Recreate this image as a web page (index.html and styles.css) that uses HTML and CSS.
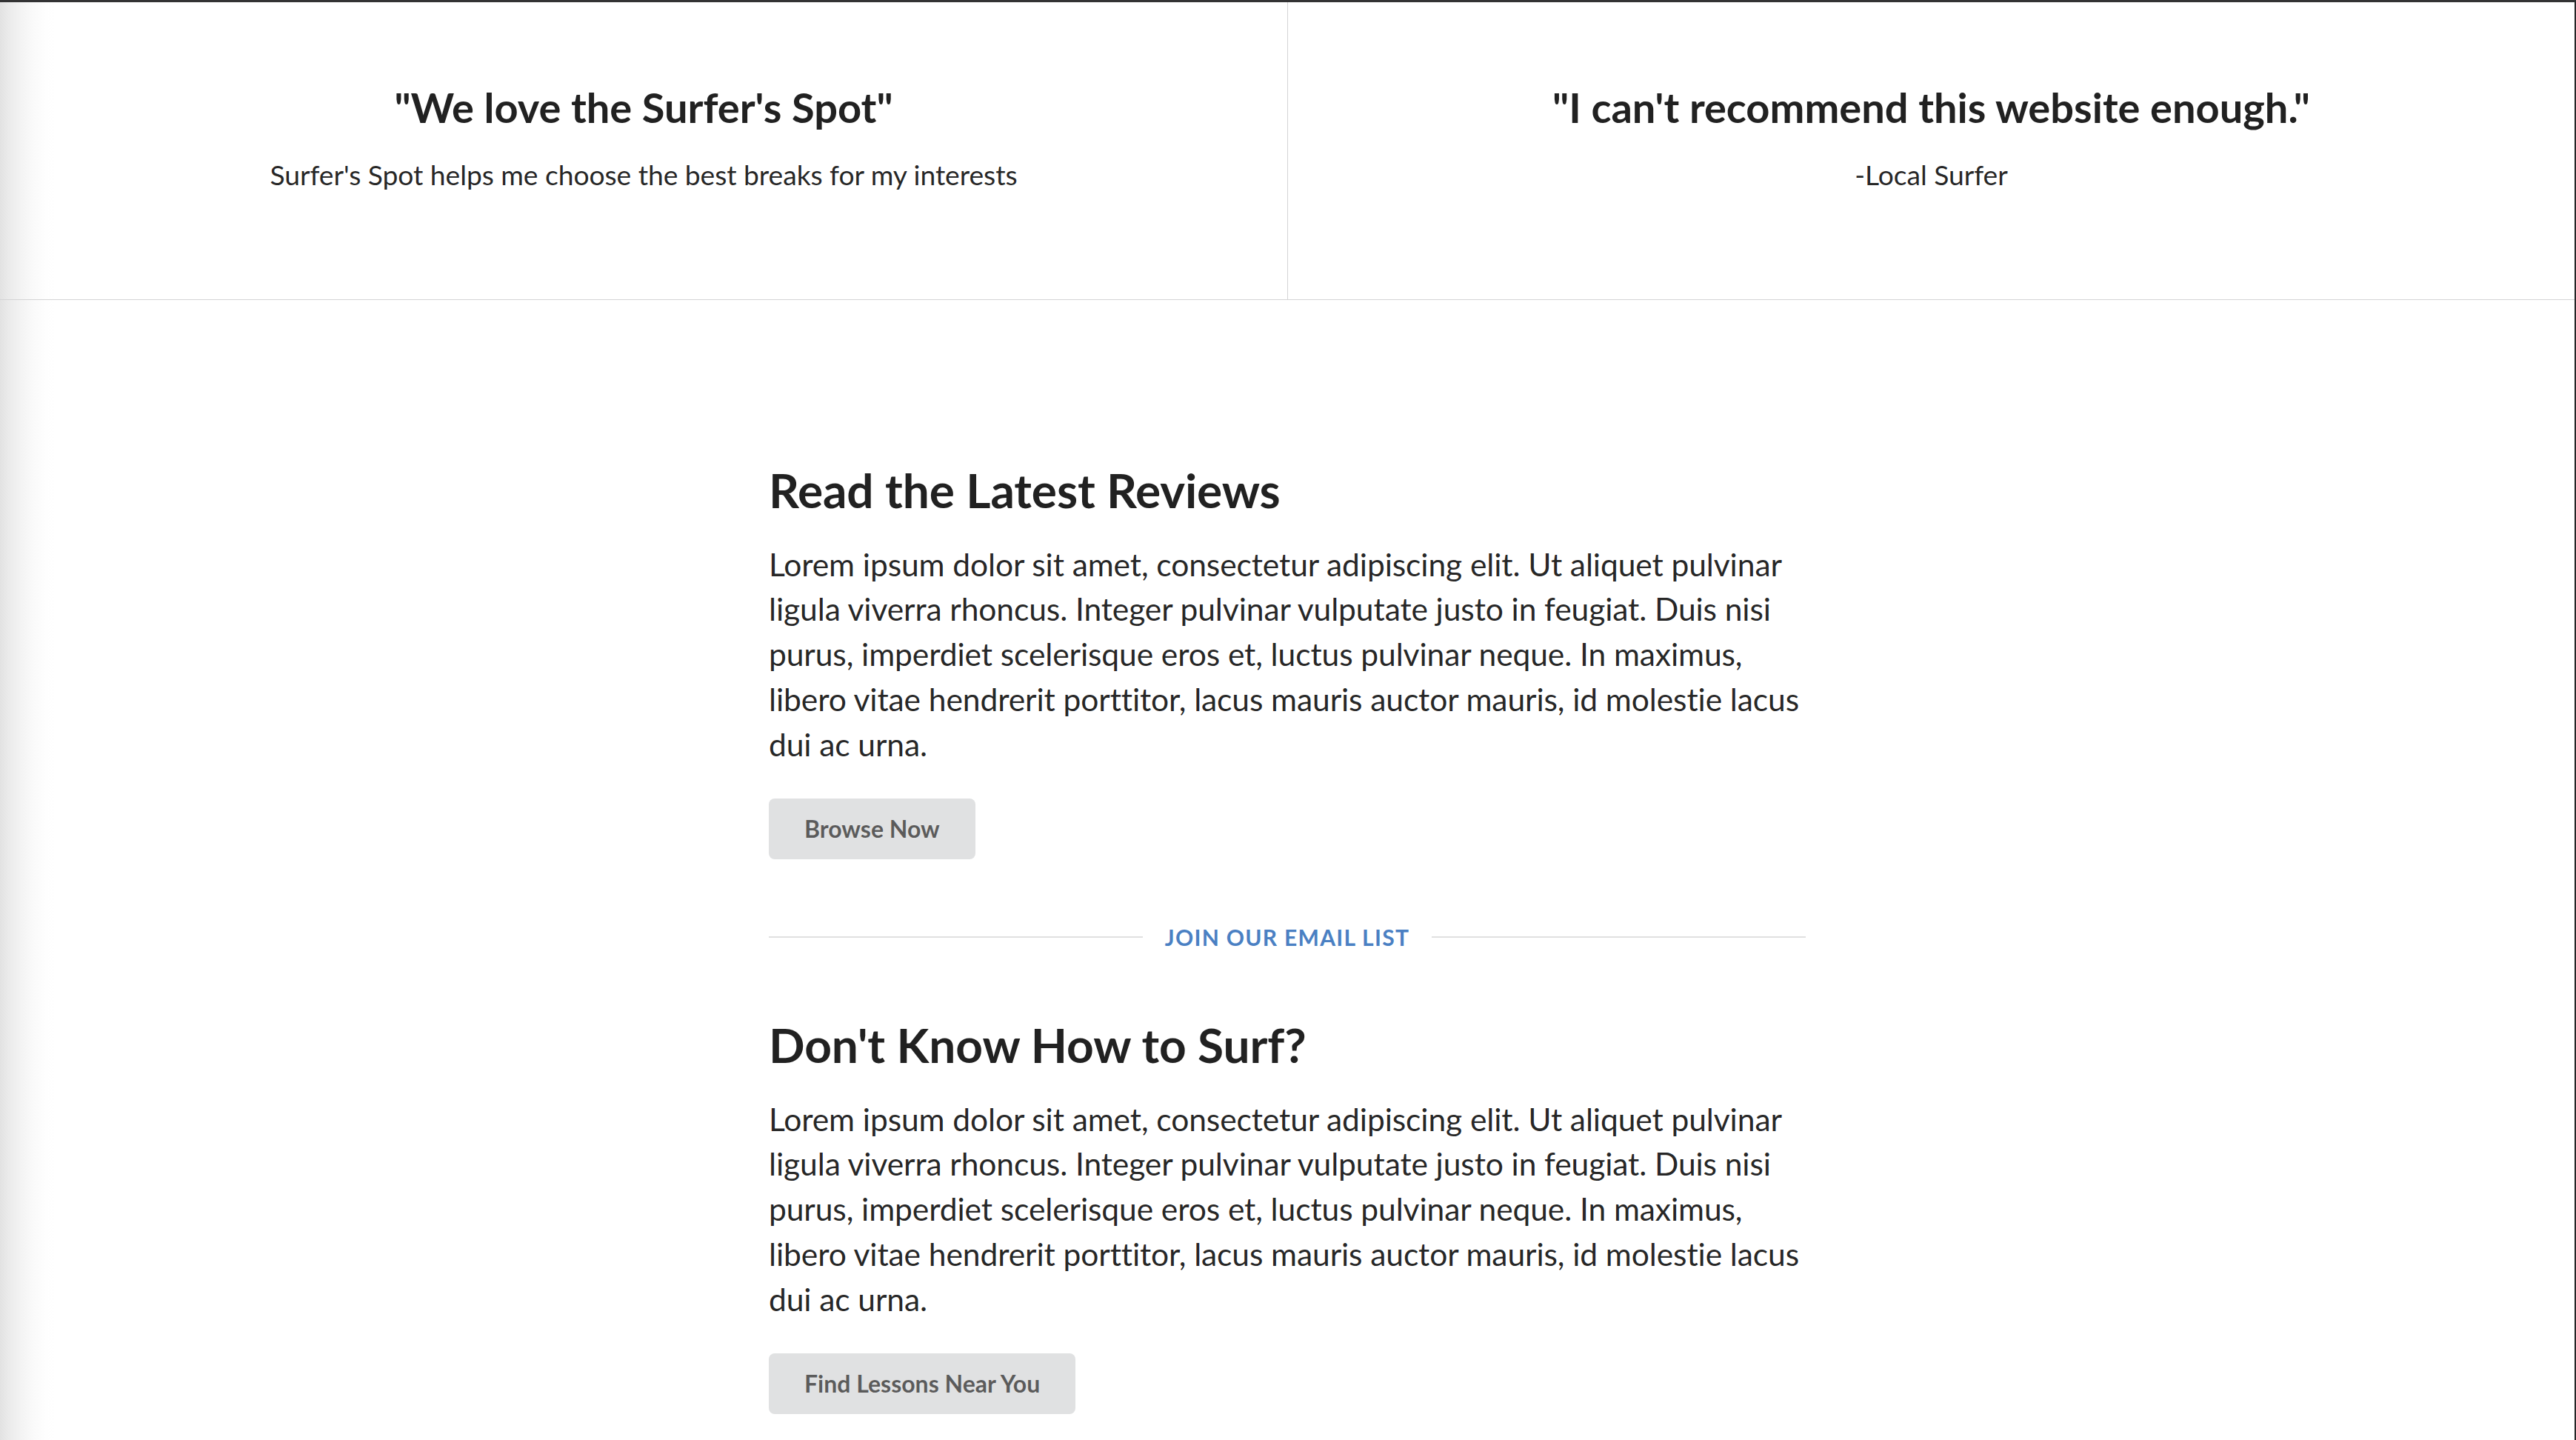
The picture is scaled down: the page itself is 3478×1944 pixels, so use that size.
FILE: index.html
```html
<!DOCTYPE html>
<html lang="en">
<head>
<meta charset="utf-8">
<title>Surfer's Spot</title>
<link rel="stylesheet" href="styles.css">
</head>
<body>
<div class="page">
  <section class="quotes">
    <div class="quote">
      <h3 class="quote-title">"We love the Surfer's Spot"</h3>
      <p class="quote-text">Surfer's Spot helps me choose the best breaks for my interests</p>
    </div>
    <div class="quote quote-second">
      <h3 class="quote-title">"I can't recommend this website enough."</h3>
      <p class="quote-text">-Local Surfer</p>
    </div>
  </section>

  <section class="stripe">
    <div class="text-container">
      <h3 class="title">Read the Latest Reviews</h3>
      <p class="lead">Lorem ipsum dolor sit amet, consectetur adipiscing elit. Ut aliquet pulvinar ligula viverra rhoncus. Integer pulvinar vulputate justo in feugiat. Duis nisi purus, imperdiet scelerisque eros et, luctus pulvinar neque. In maximus, libero vitae hendrerit porttitor, lacus mauris auctor mauris, id molestie lacus dui ac urna.</p>
      <a class="btn" href="#">Browse Now</a>

      <h4 class="hdivider"><a href="#">Join Our Email List</a></h4>

      <h3 class="title">Don't Know How to Surf?</h3>
      <p class="lead">Lorem ipsum dolor sit amet, consectetur adipiscing elit. Ut aliquet pulvinar ligula viverra rhoncus. Integer pulvinar vulputate justo in feugiat. Duis nisi purus, imperdiet scelerisque eros et, luctus pulvinar neque. In maximus, libero vitae hendrerit porttitor, lacus mauris auctor mauris, id molestie lacus dui ac urna.</p>
      <a class="btn" href="#">Find Lessons Near You</a>
    </div>
  </section>
</div>
</body>
</html>
```

FILE: styles.css
```css
html, body {
  margin: 0;
  padding: 0;
  height: 100%;
  overflow: hidden;
}

body {
  font-family: Lato, "Helvetica Neue", Arial, sans-serif;
  color: rgba(0, 0, 0, 0.87);
  background: #ffffff;
}

.page {
  box-sizing: border-box;
  min-height: 1944px;
  border-top: 3px solid #333334;
  border-right: 2px solid #262627;
  background: linear-gradient(to right, #e2e2e2 0px, #ebebeb 12px, #f3f3f3 28px, #fafafa 45px, #fefefe 62px, #ffffff 75px);
}

/* Testimonial row */
.quotes {
  display: grid;
  grid-template-columns: 1fr 1fr;
  border-bottom: 1px solid #d4d4d5;
}

.quote {
  padding: 106px 20px 142px;
  text-align: center;
}

.quote-second {
  border-left: 1px solid #d4d4d5;
}

.quote-title {
  margin: 0 0 28px;
  font-size: 56px;
  line-height: 72px;
  font-weight: 700;
}

.quote-text {
  margin: 0;
  font-size: 37.24px;
  line-height: 53.2px;
  font-weight: 400;
  letter-spacing: -0.05px;
}

/* Main stripe */
.stripe {
  padding: 216px 0 0;
}

.text-container {
  width: 1400px;
  margin: 0 auto;
}

.title {
  margin: 0 0 28px;
  font-size: 64px;
  line-height: 82.3px;
  font-weight: 700;
  letter-spacing: -0.1px;
}

.lead {
  margin: 0 0 42.56px;
  font-size: 42.56px;
  line-height: 60.8px;
  font-weight: 400;
  letter-spacing: -0.1px;
}

.btn {
  display: block;
  width: fit-content;
  padding: 25.14px 48px;
  border-radius: 8px;
  background: #e0e1e2;
  color: rgba(0, 0, 0, 0.6);
  font-size: 32px;
  line-height: 32px;
  font-weight: 700;
  text-decoration: none;
}

.hdivider {
  display: flex;
  align-items: center;
  gap: 30px;
  margin: 90px 0;
  font-size: 30px;
  line-height: 30px;
  font-weight: 700;
  text-transform: uppercase;
  letter-spacing: 1.3px;
}

.hdivider::before,
.hdivider::after {
  content: "";
  flex: 1;
  height: 2px;
  background: #e0e0e1;
}

.hdivider a {
  color: #4a80c3;
  text-decoration: none;
}
```
